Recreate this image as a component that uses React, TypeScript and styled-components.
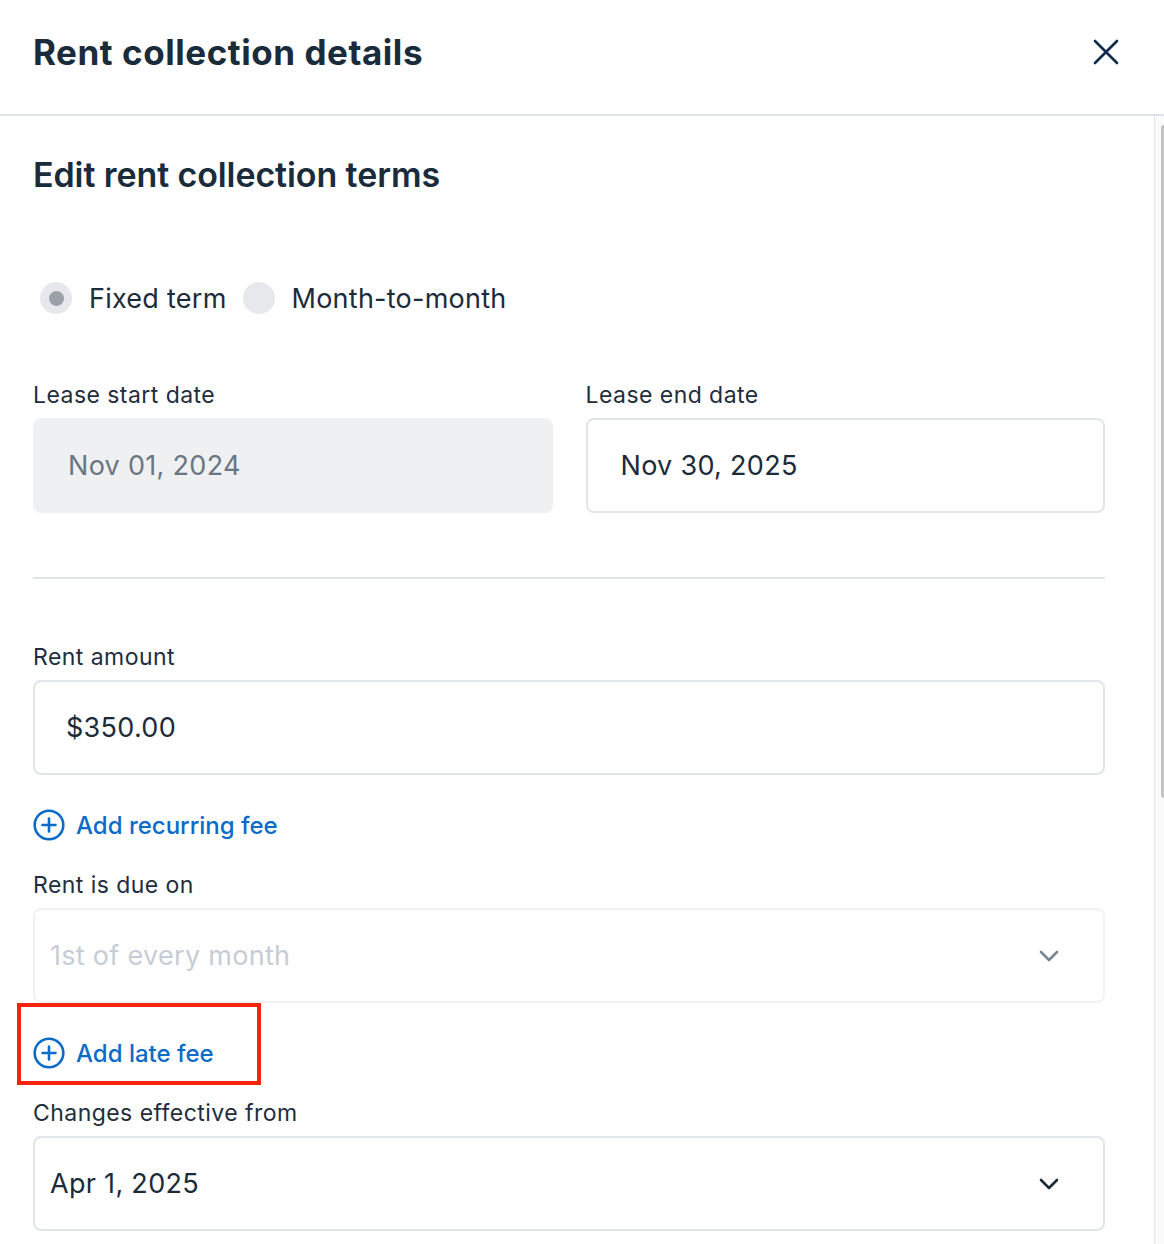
import React from "react";
import styled, { createGlobalStyle } from "styled-components";

const Global = createGlobalStyle`
  html, body { margin: 0; padding: 0; background: #ffffff; }
  body { font-family: Inter, "Noto Sans", "Liberation Sans", sans-serif; color: #1c2b3a; }
  * { box-sizing: border-box; }
`;

const Page = styled.div`
  width: 1164px;
  height: 1244px;
  display: flex;
  flex-direction: column;
  overflow: hidden;
  background: #fff;
`;

const Header = styled.header`
  height: 116px;
  flex: none;
  display: flex;
  align-items: center;
  justify-content: space-between;
  padding: 0 44px 10px 33px;
  border-bottom: 2px solid #dfe3e8;
`;

const Title = styled.h1`
  margin: 0;
  font-size: 35px;
  font-weight: 700;
  letter-spacing: 0.55px;
  color: #1a2b3c;
`;

const CloseButton = styled.button`
  border: none;
  background: none;
  padding: 0;
  width: 28px;
  height: 28px;
  display: flex;
  align-items: center;
  justify-content: center;
  cursor: pointer;
`;

const Body = styled.div`
  flex: 1;
  display: flex;
  min-height: 0;
`;

const Content = styled.main`
  flex: 1;
  padding: 39px 49px 0 33px;
  display: flex;
  flex-direction: column;
`;

const Track = styled.div`
  width: 10px;
  flex: none;
  border-left: 1px solid #e6e6e6;
  background: #fafafa;
  display: flex;
  justify-content: flex-end;
  padding-top: 9px;
`;

const Thumb = styled.div`
  width: 3px;
  height: 673px;
  border-radius: 3px 0 0 3px;
  background: #c2c2c2;
`;

const SectionTitle = styled.h2`
  margin: 0;
  font-size: 34px;
  line-height: 40px;
  font-weight: 600;
  letter-spacing: -0.1px;
  color: #1a2b3c;
`;

const RadioRow = styled.div`
  margin-top: 87px;
  height: 32px;
  padding-left: 7px;
  display: flex;
  align-items: center;
  gap: 16px;
`;

const RadioOption = styled.label`
  display: flex;
  align-items: center;
  gap: 17px;
  font-size: 27px;
  letter-spacing: 0.25px;
  color: #1c2b3a;
`;

const RadioCircle = styled.span<{ $checked?: boolean }>`
  width: 32px;
  height: 32px;
  border-radius: 50%;
  background: #e6e8eb;
  display: flex;
  align-items: center;
  justify-content: center;
  &::after {
    content: "";
    width: 15px;
    height: 15px;
    border-radius: 50%;
    background: ${(p) => (p.$checked ? "#9aa1ab" : "transparent")};
  }
`;

const DateGrid = styled.div`
  margin-top: 69px;
  display: grid;
  grid-template-columns: 1fr 1fr;
  column-gap: 33px;
`;

const Field = styled.div<{ $mt?: number }>`
  display: flex;
  flex-direction: column;
  margin-top: ${(p) => p.$mt ?? 0}px;
`;

const Label = styled.span`
  font-size: 23px;
  line-height: 24px;
  letter-spacing: 0.45px;
  color: #1f2d3d;
  margin-bottom: 11px;
`;

const InputBox = styled.div<{ $disabled?: boolean; $pad?: number; $faint?: boolean }>`
  height: 95px;
  border-radius: 8px;
  border: 2px solid ${(p) => (p.$disabled ? "#eff0f2" : p.$faint ? "#f0f2f6" : "#e1e5ea")};
  background: ${(p) => (p.$disabled ? "#eff0f2" : "#ffffff")};
  display: flex;
  align-items: center;
  justify-content: space-between;
  padding: 0 44px 0 ${(p) => p.$pad ?? 32}px;
`;

const Value = styled.span<{ $tone?: "muted" | "placeholder" | "normal" }>`
  font-size: 27px;
  letter-spacing: 0.3px;
  color: ${(p) =>
    p.$tone === "muted" ? "#6b7684" : p.$tone === "placeholder" ? "#c6cdd6" : "#1c2b3a"};
`;

const Divider = styled.hr`
  margin: 64px 0 0;
  border: none;
  border-top: 2px solid #e1e5ea;
`;

const LinkRow = styled.div<{ $mt?: number }>`
  position: relative;
  margin-top: ${(p) => p.$mt ?? 34}px;
  align-self: flex-start;
`;

const LinkButton = styled.button`
  border: none;
  background: none;
  padding: 0;
  height: 32px;
  display: flex;
  align-items: center;
  gap: 11px;
  font-family: inherit;
  font-size: 24px;
  font-weight: 500;
  color: #0b6bc8;
  cursor: pointer;
`;

const Highlight = styled.div`
  position: absolute;
  left: -16px;
  top: -34px;
  width: 244px;
  height: 82px;
  border: 4px solid #f5250a;
  pointer-events: none;
`;

const PlusCircle = () => (
  <svg width="32" height="32" viewBox="0 0 32 32" fill="none">
    <circle cx="16" cy="16" r="14.3" stroke="#0b6bc8" strokeWidth="2.6" />
    <path d="M16 9.5v13M9.5 16h13" stroke="#0b6bc8" strokeWidth="2.6" strokeLinecap="round" />
  </svg>
);

const Chevron = ({ color }: { color: string }) => (
  <svg width="20" height="12" viewBox="0 0 20 12" fill="none">
    <path d="M2 2l8 8 8-8" stroke={color} strokeWidth="2.6" strokeLinecap="round" strokeLinejoin="round" />
  </svg>
);

export default function App() {
  return (
    <>
      <Global />
      <Page>
        <Header>
          <Title>Rent collection details</Title>
          <CloseButton aria-label="Close">
            <svg width="28" height="28" viewBox="0 0 28 28" fill="none">
              <path d="M3 3l22 22M25 3L3 25" stroke="#102a4c" strokeWidth="2.6" strokeLinecap="round" />
            </svg>
          </CloseButton>
        </Header>
        <Body>
          <Content>
            <SectionTitle>Edit rent collection terms</SectionTitle>
            <RadioRow>
              <RadioOption>
                <RadioCircle $checked />
                Fixed term
              </RadioOption>
              <RadioOption>
                <RadioCircle />
                Month-to-month
              </RadioOption>
            </RadioRow>
            <DateGrid>
              <Field>
                <Label>Lease start date</Label>
                <InputBox $disabled $pad={33}>
                  <Value $tone="muted">Nov 01, 2024</Value>
                </InputBox>
              </Field>
              <Field>
                <Label>Lease end date</Label>
                <InputBox $pad={33}>
                  <Value>Nov 30, 2025</Value>
                </InputBox>
              </Field>
            </DateGrid>
            <Divider />
            <Field $mt={66}>
              <Label>Rent amount</Label>
              <InputBox $pad={31}>
                <Value>$350.00</Value>
              </InputBox>
            </Field>
            <LinkRow>
              <LinkButton>
                <PlusCircle />
                Add recurring fee
              </LinkButton>
            </LinkRow>
            <Field $mt={32}>
              <Label>Rent is due on</Label>
              <InputBox $faint $pad={15}>
                <Value $tone="placeholder">1st of every month</Value>
                <Chevron color="#7b8794" />
              </InputBox>
            </Field>
            <LinkRow>
              <Highlight />
              <LinkButton>
                <PlusCircle />
                Add late fee
              </LinkButton>
            </LinkRow>
            <Field $mt={32}>
              <Label>Changes effective from</Label>
              <InputBox $pad={15}>
                <Value>Apr 1, 2025</Value>
                <Chevron color="#1c2b3a" />
              </InputBox>
            </Field>
          </Content>
          <Track>
            <Thumb />
          </Track>
        </Body>
      </Page>
    </>
  );
}
